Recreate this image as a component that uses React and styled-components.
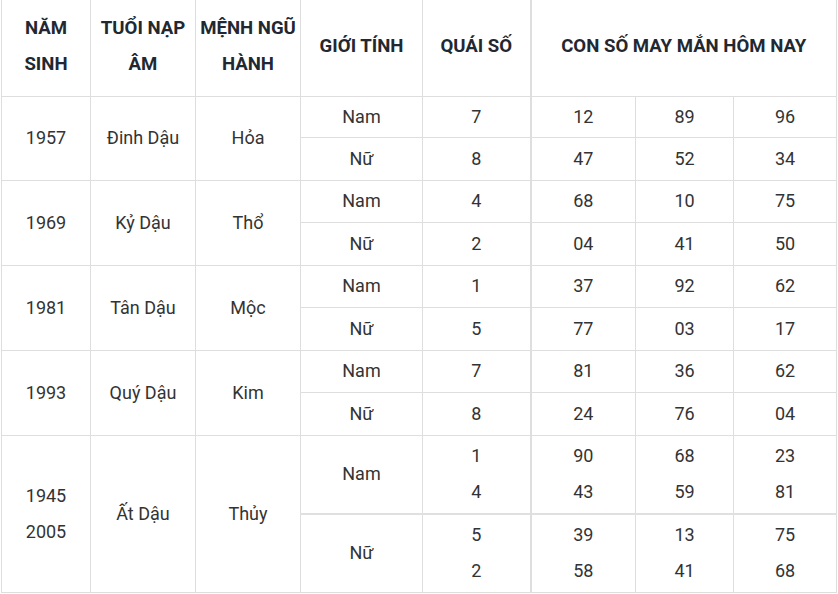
import styled, { createGlobalStyle } from 'styled-components';

const GlobalStyle = createGlobalStyle`
  html, body {
    margin: 0;
    padding: 0;
    background: #ffffff;
  }
  body {
    font-family: 'Roboto', 'Liberation Sans', sans-serif;
  }
`;

const rows = [
  {
    years: ['1957'],
    tuoi: 'Đinh Dậu',
    menh: 'Hỏa',
    genders: [
      { name: 'Nam', quai: ['7'], nums: [['12'], ['89'], ['96']] },
      { name: 'Nữ', quai: ['8'], nums: [['47'], ['52'], ['34']] },
    ],
  },
  {
    years: ['1969'],
    tuoi: 'Kỷ Dậu',
    menh: 'Thổ',
    genders: [
      { name: 'Nam', quai: ['4'], nums: [['68'], ['10'], ['75']] },
      { name: 'Nữ', quai: ['2'], nums: [['04'], ['41'], ['50']] },
    ],
  },
  {
    years: ['1981'],
    tuoi: 'Tân Dậu',
    menh: 'Mộc',
    genders: [
      { name: 'Nam', quai: ['1'], nums: [['37'], ['92'], ['62']] },
      { name: 'Nữ', quai: ['5'], nums: [['77'], ['03'], ['17']] },
    ],
  },
  {
    years: ['1993'],
    tuoi: 'Quý Dậu',
    menh: 'Kim',
    genders: [
      { name: 'Nam', quai: ['7'], nums: [['81'], ['36'], ['62']] },
      { name: 'Nữ', quai: ['8'], nums: [['24'], ['76'], ['04']] },
    ],
  },
  {
    years: ['1945', '2005'],
    tuoi: 'Ất Dậu',
    menh: 'Thủy',
    genders: [
      { name: 'Nam', quai: ['1', '4'], nums: [['90', '43'], ['68', '59'], ['23', '81']] },
      { name: 'Nữ', quai: ['5', '2'], nums: [['39', '58'], ['13', '41'], ['75', '68']] },
    ],
  },
];

const colWidths = [89, 105, 105, 122, 108, 105, 98, 103];

// chiều cao từng dòng lấy theo ảnh gốc
const rowHeights = [41, 43, 42, 43, 42, 43, 42, 43, 79, 78];

const Lines = ({ items }) =>
  items.map((t, i) => (
    <span key={i}>
      {i > 0 && <br />}
      {t}
    </span>
  ));

const App = () => {
  let r = 0;
  return (
    <>
      <GlobalStyle />
      <Wrapper>
        <Table>
          <colgroup>
            {colWidths.map((w, i) => (
              <Col key={i} $w={w} />
            ))}
          </colgroup>
          <thead>
            <HeadRow>
              <HeadCell>NĂM<br />SINH</HeadCell>
              <HeadCell>TUỔI NẠP<br />ÂM</HeadCell>
              <HeadCell>MỆNH NGŨ<br />HÀNH</HeadCell>
              <HeadCell>GIỚI TÍNH</HeadCell>
              <HeadCell>QUÁI SỐ</HeadCell>
              <HeadCell colSpan={3} $split>CON SỐ MAY MẮN HÔM NAY</HeadCell>
            </HeadRow>
          </thead>
          <tbody>
            {rows.map((row) =>
              row.genders.map((g, gi) => {
                const h = rowHeights[r++];
                const thick = row.years.length > 1 && gi === 1;
                return (
                  <BodyRow key={row.tuoi + g.name} $h={h}>
                    {gi === 0 && (
                      <>
                        <Cell rowSpan={2}><Lines items={row.years} /></Cell>
                        <Cell rowSpan={2}>{row.tuoi}</Cell>
                        <Cell rowSpan={2}>{row.menh}</Cell>
                      </>
                    )}
                    <Cell $thick={thick}>{g.name}</Cell>
                    <Cell $thick={thick}><Lines items={g.quai} /></Cell>
                    {g.nums.map((n, ni) => (
                      <Cell key={ni} $thick={thick} $split={ni === 0}>
                        <Lines items={n} />
                      </Cell>
                    ))}
                  </BodyRow>
                );
              })
            )}
          </tbody>
        </Table>
      </Wrapper>
    </>
  );
};

// Styles
const Wrapper = styled.div`
  padding-left: 1px;
  width: 837px;
`;

const Table = styled.table`
  width: 836px;
  border-collapse: collapse;
  table-layout: fixed;
  font-size: 18px;
  line-height: 36px;
`;

const Col = styled.col`
  width: ${({ $w }) => $w}px;
`;

const HeadRow = styled.tr`
  height: 96px;
`;

const HeadCell = styled.th`
  padding: 0 2px 4px;
  border: 1px solid #dedede;
  border-top: none;
  border-left-width: ${({ $split }) => ($split ? '2px' : '1px')};
  color: #222831;
  font-size: 18.6px;
  font-weight: 700;
  text-align: center;
  vertical-align: middle;
  white-space: nowrap;
`;

const BodyRow = styled.tr`
  height: ${({ $h }) => $h}px;
`;

const Cell = styled.td`
  padding: 0 4px;
  border: 1px solid #dedede;
  border-top: ${({ $thick }) => ($thick ? '2px solid #e0e0e0' : '1px solid #dedede')};
  border-left-width: ${({ $split }) => ($split ? '2px' : '1px')};
  color: #333333;
  font-weight: 400;
  text-align: center;
  vertical-align: middle;
`;

export default App;
